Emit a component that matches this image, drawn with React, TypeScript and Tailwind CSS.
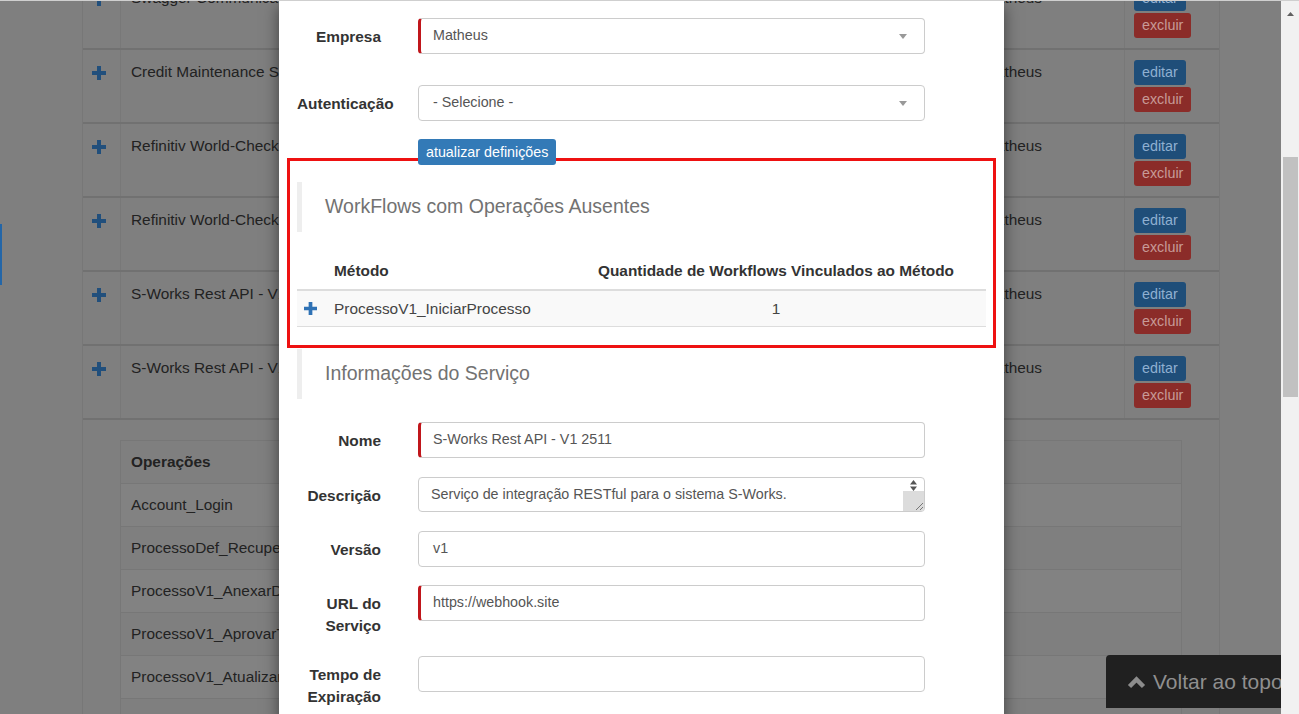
import { type FC, type ReactNode } from "react";

const PlusIcon: FC<{ size: number; color: string }> = ({ size, color }) => (
  <svg width={size} height={size} viewBox="0 0 14 14">
    <path d="M5 0h4v5h5v4H9v5H5V9H0V5h5z" fill={color} />
  </svg>
);

const Caret = () => (
  <svg width="8" height="5" viewBox="0 0 8 5" className="ml-auto mr-[17px]">
    <path d="M0 0h8L4 5z" fill="#999" />
  </svg>
);

const bgRows = [
  "Swagger Communications",
  "Credit Maintenance Service",
  "Refinitiv World-Check One",
  "Refinitiv World-Check One",
  "S-Works Rest API - V1",
  "S-Works Rest API - V1 2511",
];

const operacoes = [
  "Account_Login",
  "ProcessoDef_RecuperarDefinicao",
  "ProcessoV1_AnexarDocumento",
  "ProcessoV1_AprovarTarefa",
  "ProcessoV1_AtualizarProcesso",
  "ProcessoV1_AtualizarTarefa",
];

const Label: FC<{ children: ReactNode }> = ({ children }) => (
  <div className="w-[84px] shrink-0 text-right pt-[8px] leading-[22px] text-[15.4px] font-bold text-[#333]">
    {children}
  </div>
);

const Field: FC<{ value?: string; required?: boolean; select?: boolean }> = ({
  value,
  required,
  select,
}) => (
  <div
    className={
      required
        ? "ml-[37px] w-[507px] h-[36px] shrink-0 flex items-center border border-[#ccc] border-l-[3px] border-l-[#c0161b] rounded-[4px] pl-[12px] text-[14.3px] text-[#555]"
        : "ml-[37px] w-[507px] h-[36px] shrink-0 flex items-center border border-[#ccc] rounded-[4px] pl-[14px] text-[14.3px] text-[#555]"
    }
  >
    <span>{value}</span>
    {select && <Caret />}
  </div>
);

const SectionTitle: FC<{ children: ReactNode }> = ({ children }) => (
  <div className="h-[50px] border-l-[5px] border-[#eee] pl-[23px] flex items-center text-[19.5px] text-[#727272]">
    {children}
  </div>
);

export default function App() {
  return (
    <div className="w-[1299px] h-[714px] overflow-hidden flex flex-col font-['Liberation_Sans',Arial,sans-serif]">
      <div className="h-px bg-[#cfcfcf]" />
      <div className="flex h-[713px]">
        {/* Page behind the modal */}
        <div className="relative flex-1 bg-[#7f7f7f] overflow-hidden">
          <div className="absolute left-0 top-[223px] w-[2px] h-[61px] bg-[#2366a8]" />

          <div className="ml-[82px] w-[1138px] -mt-[25px] border-l border-r border-[#777]">
            {bgRows.map((name, i) => (
              <div
                key={i}
                className="flex h-[74px] border-b-2 border-[#717171] text-[15.4px] leading-[22px] text-[#222]"
              >
                <div className="w-[38px] shrink-0 border-r border-[#787878] pl-[9px] pt-[16px]">
                  <PlusIcon size={14} color="#214f7c" />
                </div>
                <div className="w-[855px] shrink-0 pl-[10px] pt-[11px] whitespace-nowrap">
                  {name}
                </div>
                <div className="w-[149px] shrink-0 border-r border-[#787878] pl-[7px] pt-[11px]">
                  Matheus
                </div>
                <div className="flex-1 pl-[9px] pt-[10px] flex flex-col items-start gap-[2px]">
                  <div className="h-[25px] px-[8px] rounded-[3px] bg-[#1f4e79] text-[#8fb0d1] text-[14.3px] leading-[25px]">
                    editar
                  </div>
                  <div className="h-[25px] px-[8px] rounded-[3px] bg-[#8b2c29] text-[#c79a97] text-[14.3px] leading-[25px]">
                    excluir
                  </div>
                </div>
              </div>
            ))}

            <div className="pt-[20px] px-[37px] pb-[40px]">
              <div className="border border-[#777] text-[15.4px] text-[#222]">
                <div className="h-[42px] flex items-center pl-[10px] font-bold">Operações</div>
                {operacoes.map((op, i) => (
                  <div
                    key={op}
                    className={
                      i % 2 === 0
                        ? "h-[43px] flex items-center pl-[10px] border-t border-[#777] bg-[#828282] whitespace-nowrap"
                        : "h-[43px] flex items-center pl-[10px] border-t border-[#777] whitespace-nowrap"
                    }
                  >
                    {op}
                  </div>
                ))}
              </div>
            </div>
          </div>

          {/* Modal */}
          <div className="absolute left-[279px] top-0 w-[725px] h-[720px] bg-white shadow-[0_5px_15px_rgba(0,0,0,0.5)] px-[18px] pt-[17px]">
            <div className="flex">
              <Label>Empresa</Label>
              <Field value="Matheus" required select />
            </div>
            <div className="flex mt-[31px]">
              <Label>Autenticação</Label>
              <Field value="- Selecione -" select />
            </div>
            <div className="mt-[18px] ml-[121px] relative z-10 w-fit h-[26px] px-[8px] rounded-[3px] bg-[#337ab7] text-white text-[14.3px] leading-[26px]">
              atualizar definições
            </div>

            <div className="-mt-[7px] -mx-[10px] border-[3px] border-[#ee1111] px-[7px] pt-[21px] pb-[18px]">
              <SectionTitle>WorkFlows com Operações Ausentes</SectionTitle>
              <div className="mt-[21px] text-[15.4px] text-[#333]">
                <div className="flex h-[38px] items-center border-b-2 border-[#ddd] font-bold">
                  <div className="w-[29px] shrink-0" />
                  <div className="w-[240px] shrink-0 pl-[8px]">Método</div>
                  <div className="flex-1 text-center">Quantidade de Workflows Vinculados ao Método</div>
                </div>
                <div className="flex h-[36px] items-center bg-[#f9f9f9] border-b border-[#ddd]">
                  <div className="w-[29px] shrink-0 pl-[7px] flex">
                    <PlusIcon size={13} color="#2f72b5" />
                  </div>
                  <div className="w-[240px] shrink-0 pl-[8px] text-[#444]">ProcessoV1_IniciarProcesso</div>
                  <div className="flex-1 text-center text-[#444]">1</div>
                </div>
              </div>
            </div>

            <div className="mt-px">
              <SectionTitle>Informações do Serviço</SectionTitle>
            </div>

            <div className="flex mt-[23px]">
              <Label>Nome</Label>
              <Field value="S-Works Rest API - V1 2511" required />
            </div>
            <div className="flex mt-[19px]">
              <Label>Descrição</Label>
              <div className="ml-[37px] w-[507px] h-[35px] shrink-0 flex border border-[#ccc] rounded-[4px] text-[14.3px] text-[#555] overflow-hidden">
                <div className="flex-1 pl-[12px] pt-[6px] leading-[20px]">
                  Serviço de integração RESTful para o sistema S-Works.
                </div>
                <div className="w-[21px] flex flex-col items-center">
                  <svg width="7" height="11" viewBox="0 0 7 11" className="mt-[2px]">
                    <path d="M0 4.5L3.5 0L7 4.5z M0 6.5h7L3.5 11z" fill="#555" />
                  </svg>
                  <div className="mt-auto w-[21px] h-[20px] bg-[#dcdcdc] flex items-end justify-end">
                    <svg width="10" height="10" viewBox="0 0 10 10">
                      <path d="M9 2L2 9M9 6L6 9" stroke="#777" strokeWidth="1" />
                    </svg>
                  </div>
                </div>
              </div>
            </div>
            <div className="flex mt-[19px]">
              <Label>Versão</Label>
              <Field value="v1" />
            </div>
            <div className="flex mt-[18px]">
              <Label>URL do Serviço</Label>
              <Field value="https://webhook.site" required />
            </div>
            <div className="flex mt-[19px]">
              <Label>Tempo de Expiração</Label>
              <Field />
            </div>
          </div>

          {/* Back to top */}
          <div className="absolute left-[1106px] top-[654px] w-[200px] h-[53px] rounded-tl-[4px] bg-[#202020] flex items-center pl-[21px] gap-[7px] whitespace-nowrap">
            <svg width="19" height="14" viewBox="0 0 19 14">
              <path d="M2.5 11.5L9.5 4.5L16.5 11.5" stroke="#8c8c8c" strokeWidth="4.5" fill="none" />
            </svg>
            <span className="text-[21px] text-[#8f8f8f]">Voltar ao topo</span>
          </div>
        </div>

        {/* Scrollbar */}
        <div className="w-[18px] bg-[#f1f1f1] flex flex-col items-center">
          <svg width="7" height="4" viewBox="0 0 7 4" className="mt-[11px]">
            <path d="M0 4L3.5 0L7 4z" fill="#606060" />
          </svg>
          <div className="mt-[141px] w-[15px] h-[240px] bg-[#c1c1c1]" />
        </div>
      </div>
    </div>
  );
}
